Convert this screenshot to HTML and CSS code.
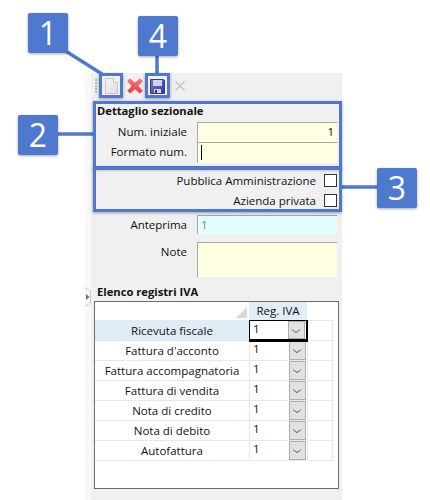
FILE: index.html
```html
<!DOCTYPE html>
<html lang="it">
<head>
    <meta charset="UTF-8">
    <meta name="viewport" content="width=device-width, initial-scale=1.0">
    <title>Dettaglio sezionale</title>
    <link rel="stylesheet" href="styles.css">
</head>
<body>
    <div class="stage">
        <div class="panel">
            <div class="splitter">
                <svg width="6" height="20" viewBox="0 0 6 20"><path d="M0 0.5 5.5 4V16L0 19.5" fill="none" stroke="#c8c8c8"/><path d="M1 7 4.5 10 1 13Z" fill="#707070"/></svg>
            </div>
            <div class="main">
                <!-- barra strumenti -->
                <div class="toolbar">
                    <span class="grip"></span>
                    <svg class="tool tool-new" width="13" height="16" viewBox="0 0 13 16">
                        <defs>
                            <linearGradient id="pageFill" x1="0" y1="0" x2="1" y2="1">
                                <stop offset="0" stop-color="#f6f6f6"/>
                                <stop offset="1" stop-color="#dedede"/>
                            </linearGradient>
                        </defs>
                        <path d="M0.5 0.5H8.5L12.5 4.5V15.5H0.5Z" fill="url(#pageFill)" stroke="#c8c8c8"/>
                        <path d="M8.5 0.5V4.5H12.5" fill="#fafafa" stroke="#c8c8c8"/>
                    </svg>
                    <svg class="tool tool-delete" width="16" height="16" viewBox="0 0 16 16">
                        <defs>
                            <linearGradient id="redFill" x1="0" y1="0" x2="0" y2="1">
                                <stop offset="0" stop-color="#f77"/>
                                <stop offset="1" stop-color="#e83838"/>
                            </linearGradient>
                        </defs>
                        <path d="M3 0.8 8 5 13 0.8 15.4 3.2 11 8 15.4 12.8 13 15.2 8 11 3 15.2 0.6 12.8 5 8 0.6 3.2Z" fill="url(#redFill)" stroke="#e05a5a" stroke-width="0.6"/>
                    </svg>
                    <svg class="tool tool-save" width="15" height="15" viewBox="0 0 15 15">
                        <defs>
                            <linearGradient id="diskFill" x1="0" y1="0" x2="1" y2="1">
                                <stop offset="0" stop-color="#6f76e0"/>
                                <stop offset="1" stop-color="#3438a0"/>
                            </linearGradient>
                        </defs>
                        <path d="M0.5 0.5H13.5L14.5 1.5V14.5H0.5Z" fill="url(#diskFill)" stroke="#3a3d80"/>
                        <rect x="3" y="1" width="9" height="6" fill="#cdd3f6"/>
                        <rect x="4" y="10" width="7" height="4" fill="#d4d4e0"/>
                        <rect x="5" y="11" width="2" height="3" fill="#33367e"/>
                    </svg>
                    <svg class="tool tool-cancel" width="10" height="10" viewBox="0 0 10 10">
                        <path d="M0.5 0.5 9.5 9.5M9.5 0.5 0.5 9.5" stroke="#c4c4c4" stroke-width="1.5" fill="none"/>
                    </svg>
                </div>

                <h3 class="section-title">Dettaglio sezionale</h3>
                <div class="form-row row-first">
                    <label>Num. iniziale</label>
                    <div class="field field-yellow field-num">1</div>
                </div>
                <div class="form-row row-format">
                    <label>Formato num.</label>
                    <div class="field field-yellow"><span class="caret"></span></div>
                </div>

                <div class="check-row check-first">Pubblica Amministrazione<span class="checkbox"></span></div>
                <div class="check-row">Azienda privata<span class="checkbox"></span></div>

                <div class="form-row row-preview">
                    <label>Anteprima</label>
                    <div class="field field-blue">1</div>
                </div>
                <div class="form-row row-note">
                    <label>Note</label>
                    <div class="field field-yellow"></div>
                </div>

                <h3 class="section-title list-title">Elenco registri IVA</h3>
                <div class="grid">
                    <div class="grid-head">
                        <div class="head-corner"><span class="sort-mark"></span></div>
                        <div class="head-cell">Reg. IVA</div>
                        <div class="head-rest"></div>
                    </div>
                    <div class="grid-row selected">
                        <div class="name">Ricevuta fiscale</div>
                        <div class="combo"><span class="combo-value">1</span><span class="combo-btn"></span></div>
                        <div class="rest"></div>
                    </div>
                    <div class="grid-row">
                        <div class="name">Fattura d'acconto</div>
                        <div class="combo"><span class="combo-value">1</span><span class="combo-btn"></span></div>
                        <div class="rest"></div>
                    </div>
                    <div class="grid-row">
                        <div class="name">Fattura accompagnatoria</div>
                        <div class="combo"><span class="combo-value">1</span><span class="combo-btn"></span></div>
                        <div class="rest"></div>
                    </div>
                    <div class="grid-row">
                        <div class="name">Fattura di vendita</div>
                        <div class="combo"><span class="combo-value">1</span><span class="combo-btn"></span></div>
                        <div class="rest"></div>
                    </div>
                    <div class="grid-row">
                        <div class="name">Nota di credito</div>
                        <div class="combo"><span class="combo-value">1</span><span class="combo-btn"></span></div>
                        <div class="rest"></div>
                    </div>
                    <div class="grid-row">
                        <div class="name">Nota di debito</div>
                        <div class="combo"><span class="combo-value">1</span><span class="combo-btn"></span></div>
                        <div class="rest"></div>
                    </div>
                    <div class="grid-row">
                        <div class="name">Autofattura</div>
                        <div class="combo"><span class="combo-value">1</span><span class="combo-btn"></span></div>
                        <div class="rest"></div>
                    </div>
                </div>
            </div>
        </div>

        <!-- annotazioni sopra lo screenshot -->
        <svg class="leaders" width="430" height="500" viewBox="0 0 430 500">
            <path d="M64 50 102 74M157 54V74M56 134H94M341 187H379" fill="none" stroke="#4f78cf" stroke-width="3.5"/>
        </svg>
        <div class="hl hl-new"></div>
        <div class="hl hl-save"></div>
        <div class="hl hl-detail"></div>
        <div class="hl hl-checks"></div>
        <div class="callout c1">1</div>
        <div class="callout c2">2</div>
        <div class="callout c3">3</div>
        <div class="callout c4">4</div>
    </div>
</body>
</html>
```

FILE: styles.css
```css
body {
    margin: 0;
    background: #fff;
    font-family: "Open Sans", "Liberation Sans", sans-serif;
    font-size: 11.5px;
    color: #111;
}
.stage {
    position: relative;
    width: 430px;
    height: 500px;
    overflow: hidden;
}
.panel {
    display: flex;
    width: 257px;
    height: 427px;
    margin: 73px 0 0 85px;
    background: #f8f8f8;
}
.splitter {
    width: 6px;
    padding-top: 214px;
    box-sizing: border-box;
}
.splitter svg {
    display: block;
}
.main {
    width: 251px;
    background: #f0f0f0;
}
.toolbar {
    display: flex;
    align-items: center;
    height: 28px;
    margin-left: -6px;
    padding-bottom: 2px;
    box-sizing: border-box;
}
.grip {
    width: 2px;
    height: 14px;
    margin-left: 10px;
    background: repeating-linear-gradient(#b8b8b8 0 2px, transparent 2px 3px);
}
.tool {
    display: block;
}
.tool-new {
    margin-left: 8px;
}
.tool-delete {
    margin-left: 9px;
}
.tool-save {
    margin-left: 7px;
}
.tool-cancel {
    margin-left: 10px;
}
.section-title {
    margin: 0;
    padding-left: 6px;
    height: 21px;
    line-height: 19px;
    font-size: 11.2px;
    font-weight: 700;
}
.form-row {
    display: grid;
    grid-template-columns: 96px 140px;
    column-gap: 10px;
}
.form-row label {
    text-align: right;
    line-height: 19px;
}
.field {
    box-sizing: border-box;
    padding: 0 3px;
    line-height: 17px;
    border-top: 1px solid #a8a8a8;
    border-left: 1px solid #a8a8a8;
}
.field-yellow {
    background: #ffffe1;
}
.field-blue {
    background: #e0ffff;
    color: #808080;
}
.field-num {
    text-align: right;
}
.row-first .field {
    height: 20px;
}
.row-format .field {
    height: 21px;
}
.caret {
    display: inline-block;
    width: 1px;
    height: 15px;
    margin-top: 2px;
    background: #000;
}
.check-row {
    display: flex;
    justify-content: flex-end;
    align-items: center;
    column-gap: 8px;
    height: 20px;
    padding-right: 5px;
}
.check-first {
    margin-top: 7px;
}
.checkbox {
    box-sizing: border-box;
    width: 13px;
    height: 13px;
    background: #fff;
    border: 1px solid #333;
}
.row-preview {
    margin-top: 5px;
}
.row-preview .field {
    height: 19px;
}
.row-note {
    margin-top: 8px;
}
.row-note .field {
    height: 35px;
}
.list-title {
    margin-top: 7px;
    height: 17px;
    line-height: 16px;
}
.grid {
    box-sizing: border-box;
    width: 245px;
    height: 188px;
    margin-left: 3px;
    background: #fff;
    border: 1px solid #6e6e6e;
}
.grid-head,
.grid-row {
    display: grid;
    grid-template-columns: 154px 58px 26px;
}
.grid-head {
    height: 18px;
}
.head-corner {
    position: relative;
}
.sort-mark {
    position: absolute;
    right: 2px;
    bottom: 2px;
    border-left: 11px solid transparent;
    border-bottom: 11px solid #d8d8d8;
}
.head-cell {
    background: #e1eef7;
    text-align: center;
    line-height: 18px;
}
.grid-row {
    height: 20px;
    line-height: 19px;
}
.name,
.combo,
.rest {
    box-sizing: border-box;
    border-top: 1px solid #e8e8e8;
    border-bottom: 1px solid #e8e8e8;
    margin-bottom: -1px;
}
.name {
    text-align: center;
}
.combo {
    position: relative;
    display: flex;
    justify-content: space-between;
    border-left: 1px solid #e8e8e8;
}
.rest {
    border-left: 1px solid #e8e8e8;
    border-right: 1px solid #e8e8e8;
}
.combo-value {
    padding-left: 3px;
    line-height: 15px;
}
.combo-btn {
    position: relative;
    width: 17px;
    margin-right: 1px;
    background: #e1e1e1;
    border: 1px solid #adadad;
    box-sizing: border-box;
}
.combo-btn::after {
    content: "";
    position: absolute;
    left: 4px;
    top: 5px;
    width: 5px;
    height: 5px;
    border-right: 1px solid #666;
    border-bottom: 1px solid #666;
    transform: scaleY(0.7) rotate(45deg);
}
.selected .name {
    background: #deecf5;
}
.selected .combo {
    z-index: 1;
    height: 22px;
    margin: 0 -1px -2px 0;
    background: #fff;
    border: 1px solid #000;
    border-right-width: 2px;
    border-bottom-width: 3px;
}
.leaders {
    position: absolute;
    left: 0;
    top: 0;
}
.hl {
    position: absolute;
    box-sizing: border-box;
    border: 3px solid #4f78cf;
    box-shadow: 0 1px 3px rgba(0, 0, 0, 0.35);
}
.hl-new {
    left: 99px;
    top: 73px;
    width: 24px;
    height: 25px;
}
.hl-save {
    left: 145px;
    top: 73px;
    width: 25px;
    height: 25px;
}
.hl-detail {
    left: 93px;
    top: 101px;
    width: 249px;
    height: 68px;
}
.hl-checks {
    left: 93px;
    top: 167px;
    width: 249px;
    height: 45px;
}
.callout {
    position: absolute;
    width: 40px;
    height: 40px;
    background: #4f78cf;
    border-radius: 2px;
    box-shadow: 0 1px 3px rgba(0, 0, 0, 0.35);
    color: #fff;
    font-size: 32px;
    line-height: 40px;
    text-align: center;
}
.c1 {
    left: 28px;
    top: 13px;
}
.c2 {
    left: 18px;
    top: 115px;
}
.c3 {
    left: 377px;
    top: 168px;
}
.c4 {
    left: 138px;
    top: 16px;
}
```
